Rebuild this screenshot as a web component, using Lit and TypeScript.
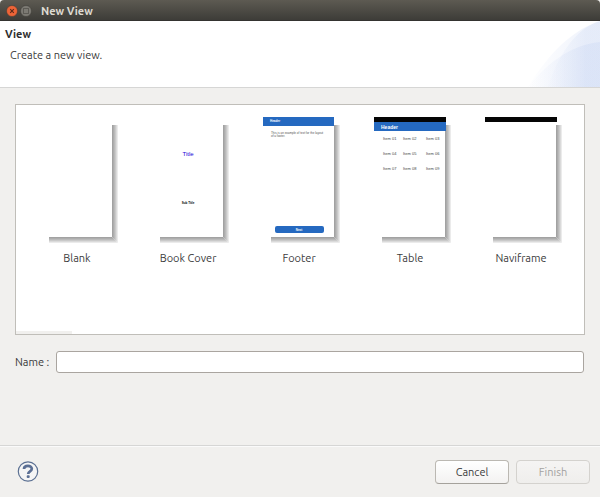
import { LitElement, html, css, svg } from "lit";
import { customElement, property, state } from "lit/decorators.js";

type Kind = "Blank" | "Book Cover" | "Footer" | "Table" | "Naviframe";

const KINDS: Kind[] = ["Blank", "Book Cover", "Footer", "Table", "Naviframe"];

@customElement("view-thumb")
export class ViewThumb extends LitElement {
  @property() kind: Kind = "Blank";

  static styles = css`
    :host {
      display: block;
      width: 72px;
      height: 128px;
    }
    .art {
      display: block;
      overflow: visible;
      font-family: "Liberation Sans", sans-serif;
    }
  `;

  private shadow() {
    const shades = ["#a2a2a2", "#adadad", "#bababa", "#c9c9c9", "#dadada", "#ebebeb"];
    return shades.map(
      (c, i) => svg`<path d="M${71.5 + i} 8V${120.5 + i}H8" fill="none" stroke=${c} />`
    );
  }

  private content() {
    switch (this.kind) {
      case "Book Cover":
        return svg`
          <text x="36" y="39" text-anchor="middle" font-size="6" fill="#1c00d8">Title</text>
          <text x="36" y="87" text-anchor="middle" font-size="3" font-weight="bold" fill="#000">Sub Title</text>`;
      case "Footer":
        return svg`
          <rect width="71" height="9" fill="#2569c0" />
          <text x="7" y="5" font-size="3" font-weight="bold" fill="#fff">Header</text>
          <text x="8" y="17" font-size="3" fill="#555">This is an example of text for the layout</text>
          <text x="8" y="20" font-size="3" fill="#555">of a footer.</text>
          <rect x="12" y="109" width="49" height="7" rx="2" fill="#2569c0" />
          <text x="36" y="114" text-anchor="middle" font-size="3" font-weight="bold" fill="#fff">Next</text>`;
      case "Table":
        return svg`
          <rect width="72" height="5" fill="#050505" />
          <rect y="5" width="72" height="9" fill="#2569c0" />
          <text x="7" y="12" font-size="5" font-weight="bold" fill="#fff">Header</text>
          ${[0, 1, 2].map((r) =>
            [0, 1, 2].map(
              (c) => svg`<text x=${[9, 29, 52][c]} y=${23 + r * 15} font-size="4" fill="#444">Item 0${r * 3 + c + 1}</text>`
            )
          )}`;
      case "Naviframe":
        return svg`<rect width="72" height="5" fill="#050505" />`;
      default:
        return svg``;
    }
  }

  render() {
    return html`<svg class="art" width="72" height="128" viewBox="0 0 72 128" aria-hidden="true">
      ${this.shadow()}${this.content()}
    </svg>`;
  }
}

@customElement("app-root")
export class AppRoot extends LitElement {
  @state() private selected = "";

  static styles = css`
    :host {
      display: flex;
      flex-direction: column;
      min-height: 100vh;
      background: #f1f0ee;
      color: #3c3c3c;
      font: 11px/16px Ubuntu, "Noto Sans", sans-serif;
    }
    * {
      box-sizing: border-box;
    }
    button,
    input {
      font: inherit;
      color: inherit;
    }
    .titlebar {
      display: flex;
      align-items: center;
      gap: 2px;
      height: 21px;
      padding: 2px 6px 0;
      background: linear-gradient(#5d5a52, #3d3c38);
      border-bottom: 1px solid #343330;
      border-radius: 4px 4px 0 0;
      color: #dfdbd2;
    }
    .wm {
      width: 12px;
      height: 12px;
      padding: 0;
      border: 0;
      background: none;
    }
    .wm svg {
      display: block;
    }
    .window-title {
      margin: 0 0 0 7px;
      font-size: 11px;
      font-weight: 700;
    }
    .banner {
      position: relative;
      height: 67px;
      padding: 5px;
      background: #fff;
      border-bottom: 1px solid #d6d6d5;
    }
    .banner-title {
      margin: 0;
      font-size: 11px;
      font-weight: 700;
      color: #2e2e2e;
    }
    .banner-text {
      margin: 5px;
    }
    .swoosh {
      position: absolute;
      right: 0;
      top: 0;
    }
    .body {
      flex: 1;
      display: flex;
      flex-direction: column;
      gap: 16px;
      padding: 16px 15px 72px;
    }
    .gallery {
      position: relative;
      flex: 1;
      display: grid;
      grid-template-columns: repeat(auto-fill, 110px);
      align-content: start;
      column-gap: 1px;
      padding: 12px 0 12px 6px;
      background: #fff;
      border: 1px solid #c0beb9;
    }
    .gallery::after {
      content: "";
      position: absolute;
      left: 0;
      bottom: 0;
      width: 56px;
      height: 3px;
      background: #f1f0ee;
    }
    .item {
      display: flex;
      flex-direction: column;
      align-items: center;
      gap: 5px;
      padding: 0;
      border: 0;
      background: none;
    }
    .field {
      display: flex;
      align-items: center;
      gap: 7px;
    }
    .name {
      flex: 1;
      min-width: 0;
      height: 22px;
      margin-right: 1px;
      padding: 0 6px;
      background: #fff;
      border: 1px solid #aaa5a0;
      border-radius: 3px;
    }
    .actions {
      display: flex;
      align-items: center;
      gap: 7px;
      height: 52px;
      padding: 0 10px 0 17px;
      border-top: 1px solid #d6d6d5;
      box-shadow: inset 0 1px #fafafa;
    }
    .help {
      margin-right: auto;
      padding: 0;
      border: 0;
      background: none;
    }
    .help svg {
      display: block;
    }
    .push {
      width: 74px;
      height: 24px;
      padding: 0;
      border: 1px solid #bbb8b2;
      border-bottom-color: #a5a29c;
      border-radius: 4px;
      background: linear-gradient(#fff, #f3f2f1);
    }
    .push:disabled {
      border-color: #d4d2ce;
      background: linear-gradient(#f5f4f3, #efeeec);
      color: #a3a2a0;
    }
  `;

  render() {
    return html`
      <header class="titlebar">
        <button class="wm" aria-label="Close">
          <svg width="12" height="12" viewBox="0 0 12 12">
            <circle cx="6" cy="6" r="5.5" fill="#ed6437" stroke="#3b3935" stroke-width=".5" />
            <path d="M4.2 4.2l3.6 3.6M7.8 4.2l-3.6 3.6" stroke="#5a291a" stroke-width="1.1" />
          </svg>
        </button>
        <button class="wm" aria-label="Maximize">
          <svg width="12" height="12" viewBox="0 0 12 12">
            <circle cx="6" cy="6" r="5.5" fill="#7c7a73" stroke="#3b3935" stroke-width=".5" />
            <rect x="3.5" y="3.5" width="5" height="5" fill="none" stroke="#5c5a54" />
          </svg>
        </button>
        <h1 class="window-title">New View</h1>
      </header>
      <section class="banner">
        <svg class="swoosh" width="74" height="66" viewBox="0 0 74 66" aria-hidden="true">
          <defs>
            <linearGradient id="fade" gradientUnits="userSpaceOnUse" x1="0" y1="0" x2="60" y2="0">
              <stop offset="0" stop-color="#b5c7ee" stop-opacity="0" />
              <stop offset="1" stop-color="#b5c7ee" stop-opacity=".2" />
            </linearGradient>
            <linearGradient id="fade2" gradientUnits="userSpaceOnUse" x1="18" y1="0" x2="60" y2="0">
              <stop offset="0" stop-color="#b5c7ee" stop-opacity="0" />
              <stop offset="1" stop-color="#b5c7ee" stop-opacity=".18" />
            </linearGradient>
          </defs>
          <path d="M2 66C18 40 42 10 74 0V66Z" fill="url(#fade)" />
          <path d="M22 66C31 37 48 8 74 0V66Z" fill="url(#fade2)" />
          <path d="M2 66C18 46 42 24 74 21V66Z" fill="url(#fade)" />
        </svg>
        <h2 class="banner-title">View</h2>
        <p class="banner-text">Create a new view.</p>
      </section>
      <main class="body">
        <div class="gallery">
          ${KINDS.map(
            (k) => html`<button
              class="item"
              aria-pressed=${this.selected === k ? "true" : "false"}
              @click=${() => (this.selected = k)}
            >
              <view-thumb .kind=${k}></view-thumb>
              <span>${k}</span>
            </button>`
          )}
        </div>
        <div class="field">
          <label for="name">Name :</label>
          <input id="name" class="name" type="text" />
        </div>
      </main>
      <footer class="actions">
        <button class="help" aria-label="Help">
          <svg width="22" height="22" viewBox="0 0 22 22">
            <circle cx="11" cy="10.5" r="9.7" fill="#f5f5f5" stroke="#5b7092" stroke-width="1.2" />
            <path d="M7 8C7 3.8 14.8 3.8 14.8 7.8C14.8 10.4 11.2 10.2 11.2 13" fill="none" stroke="#5b6f94" stroke-width="2.7" />
            <rect x="9.7" y="14.3" width="3" height="2.7" rx="1" fill="#5b6f94" />
          </svg>
        </button>
        <button class="push">Cancel</button>
        <button class="push" disabled>Finish</button>
      </footer>
    `;
  }
}
